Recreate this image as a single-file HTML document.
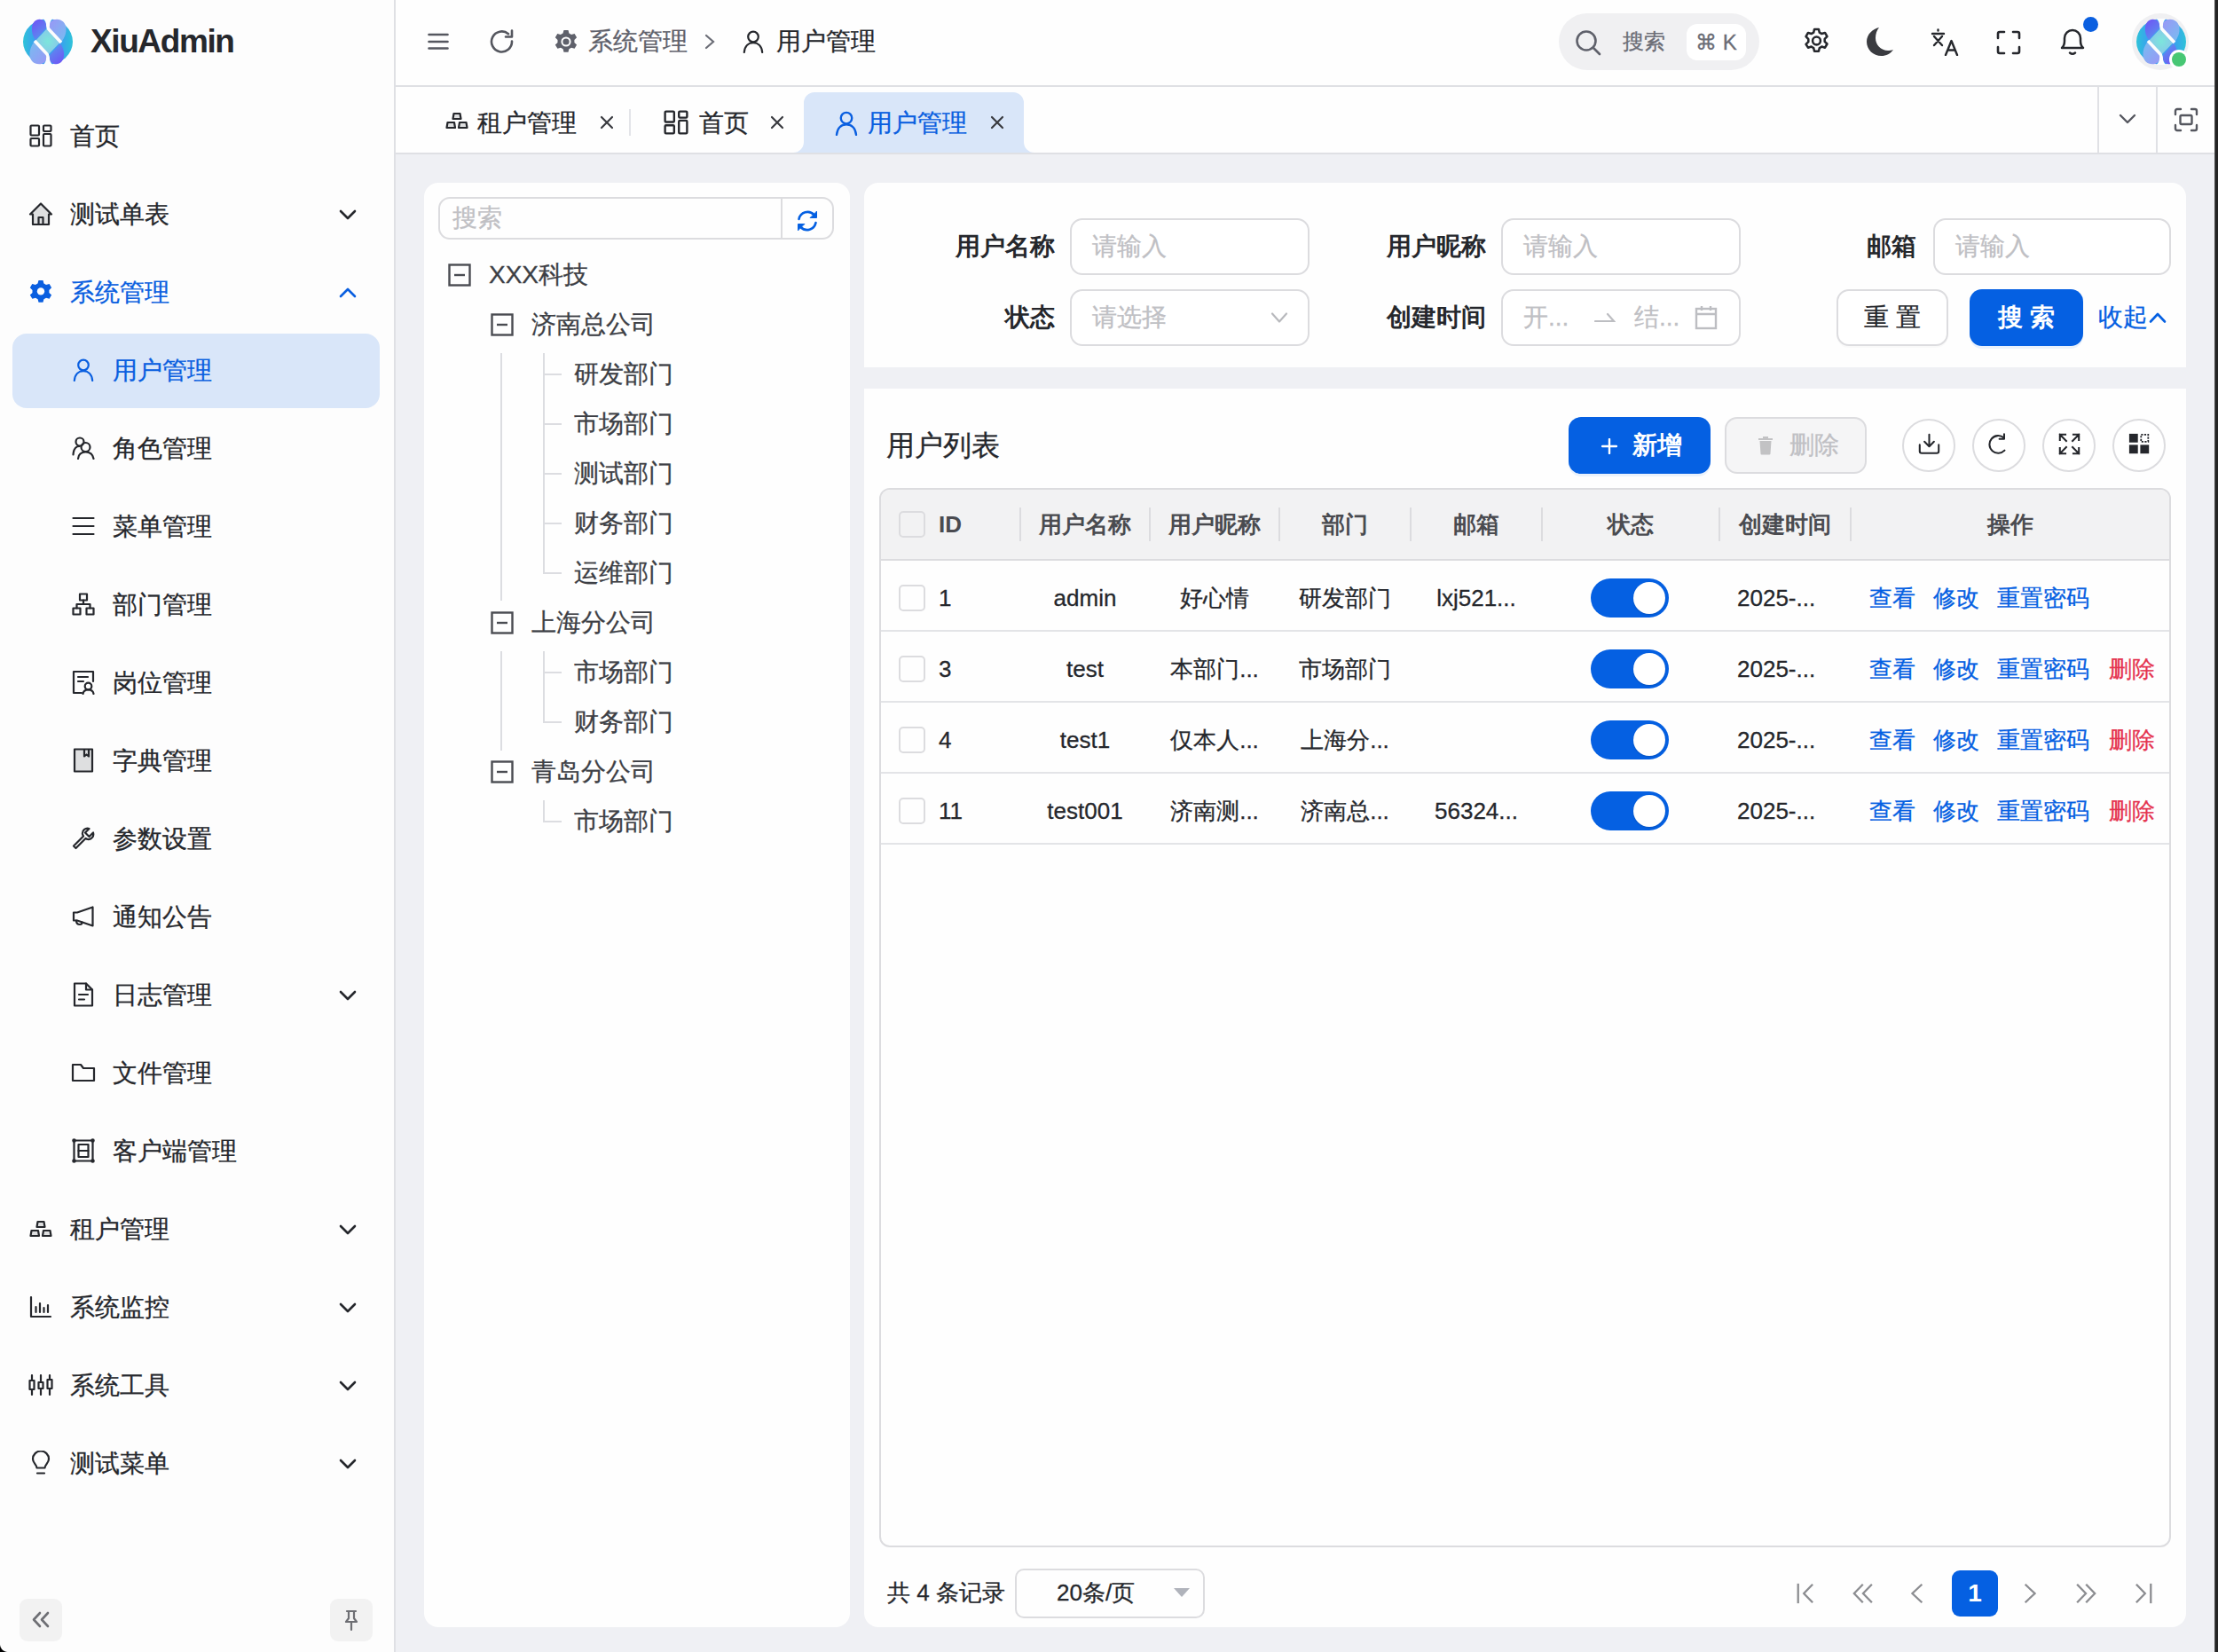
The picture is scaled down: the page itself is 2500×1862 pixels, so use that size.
<!DOCTYPE html>
<html><head><meta charset="utf-8">
<style>
*{box-sizing:border-box;margin:0;padding:0}
html,body{width:2500px;height:1862px;overflow:hidden}
body{position:relative;background:#eff0f4;font-family:"Liberation Sans",sans-serif;color:#25272c;-webkit-text-stroke:0.3px}
.abs{position:absolute}
svg{display:block}
.tx28{font-size:28px;height:40px;line-height:40px;white-space:nowrap}
#edge{left:2496px;top:0;width:4px;height:1862px;background:#242424;border-left:1px solid #4e4e4e}
#corner{left:0;top:1853px;width:9px;height:9px;background:radial-gradient(circle at 9px 0,rgba(0,0,0,0) 8.5px,#000 9.5px)}
#side{left:0;top:0;width:444px;height:1862px;background:#fdfdfd}
#sideb{left:444px;top:0;width:2px;height:1862px;background:#dfe0e4}
.logo{left:26px;top:21px;width:56px;height:52px}
.brand{left:102px;top:22px;height:50px;line-height:50px;font-size:37px;font-weight:bold;color:#25272c;letter-spacing:-1.4px;-webkit-text-stroke:0}
.mi{position:absolute;left:0;width:444px;height:88px;font-size:28px;color:#25272c}
.mi .ic{position:absolute}
.mi .tx{position:absolute;left:79px;top:1px;height:88px;line-height:88px;white-space:nowrap}
.mi.l2 .tx{left:127px}
.mi .chev{position:absolute;left:382px;top:39px;width:20px;height:12px}
.mi.act{color:#0a5fe0}
#activebg{left:14px;top:376px;width:414px;height:84px;background:#d9e6f9;border-radius:16px}
.sbtn{top:1802px;width:48px;height:48px;background:#f2f2f2;border-radius:9px}
#hdr{left:446px;top:0;width:2050px;height:96px;background:#fefefe}
#hdrb{left:446px;top:96px;width:2050px;height:2px;background:#dfe0e4}
#tabs{left:446px;top:98px;width:2050px;height:74px;background:#fefefe}
#tabsb{left:446px;top:172px;width:2050px;height:2px;background:#dfe0e4}
.card{background:#fefefe}
@media (max-width:1300px){html{zoom:0.5}}
.ph{font-size:28px;height:40px;line-height:40px;color:#bfc0c4;white-space:nowrap}
.tt{font-size:28px;height:40px;line-height:40px;color:#3d3f45;white-space:nowrap}
.lbl{font-size:28px;height:40px;line-height:40px;color:#25272c;font-weight:bold;-webkit-text-stroke:0;text-align:right;white-space:nowrap}
.th{font-size:26px;height:40px;line-height:40px;color:#4a4b50;font-weight:bold;-webkit-text-stroke:0;white-space:nowrap}
.td{font-size:26px;height:38px;line-height:38px;color:#25272c;white-space:nowrap}
</style></head><body>
<div class="abs" id="side"></div>
<div class="abs" id="sideb"></div>
<div class="abs" id="hdr"></div>
<div class="abs" id="hdrb"></div>
<div class="abs" id="tabs"></div>
<div class="abs" id="tabsb"></div>
<div class="abs logo"><svg viewBox="0 0 56 52" width="56" height="52">
<defs>
<linearGradient id="lg0" x1="0" y1="0" x2="1" y2="0"><stop offset="0" stop-color="#2ec3d8"/><stop offset=".25" stop-color="#3a9ff0"/><stop offset=".75" stop-color="#3a9ff0"/><stop offset="1" stop-color="#2ec3d8"/></linearGradient>
<radialGradient id="lg1" cx=".5" cy=".5" r=".6"><stop offset="0" stop-color="#7ce6dc"/><stop offset="1" stop-color="#8cc0ec"/></radialGradient>
<linearGradient id="lgp" x1="0" y1="0" x2="0.6" y2="1"><stop offset="0" stop-color="#7050f6"/><stop offset="1" stop-color="#5a90ee"/></linearGradient>
<linearGradient id="lgl" x1="0" y1="0" x2="1" y2="1"><stop offset="0" stop-color="#9a96f6"/><stop offset="1" stop-color="#78bdf0"/></linearGradient>
</defs>
<ellipse cx="28" cy="26" rx="28" ry="25.8" fill="url(#lg0)"/>
<g>
<path d="M18.5 0.7 C23 0.7 26.5 4 26.5 8 C26.5 10 25.5 11.5 24.5 12.5 L14 24 C11 20 9.5 15 10 10 C10.5 4.5 14 0.7 18.5 0.7Z" fill="url(#lgp)"/>
<path d="M38 0.7 C44 0.7 48 5 48.5 10.5 C49 16 47 21 43.5 26 L31 12 C30 11 29.5 9.5 29.5 8 C29.5 4 33 0.7 38 0.7Z" fill="url(#lgl)"/>
</g><g transform="rotate(180 28 26)">
<path d="M18.5 0.7 C23 0.7 26.5 4 26.5 8 C26.5 10 25.5 11.5 24.5 12.5 L14 24 C11 20 9.5 15 10 10 C10.5 4.5 14 0.7 18.5 0.7Z" fill="url(#lgp)"/>
<path d="M38 0.7 C44 0.7 48 5 48.5 10.5 C49 16 47 21 43.5 26 L31 12 C30 11 29.5 9.5 29.5 8 C29.5 4 33 0.7 38 0.7Z" fill="url(#lgl)"/>
</g>
<path d="M28 10 L42.5 26 L28 41 L13.5 25.5Z" fill="url(#lg1)"/>
<path d="M28 0 V9 Q28 11 29.5 12.5 L43 27" stroke="#fdfdfd" stroke-width="3.6" fill="none"/>
<path d="M13 25 L26.5 39.5 Q28 41 28 43 V52" stroke="#fdfdfd" stroke-width="3.6" fill="none"/>
<path d="M21 -1 H35 C31.5 1 30 4 29.8 8 L28 10 L26.2 8 C26 4 24.5 1 21 -1Z" fill="#fdfdfd"/>
<path d="M21 53 H35 C31.5 51 30 48 29.8 44 L28 42 L26.2 44 C26 48 24.5 51 21 53Z" fill="#fdfdfd"/>
</svg></div><div class="abs brand">XiuAdmin</div><div class="abs" id="activebg"></div><div class="mi" style="top:109px"><div class="ic" style="left:33.0px;top:31.0px"><svg viewBox="0 0 26 26" width="26" height="26" fill="none" stroke="currentColor" stroke-width="2.2" stroke-linecap="round" stroke-linejoin="round"><rect x="1.5" y="1.5" width="9.5" height="11" rx="1"/><rect x="1.5" y="16" width="9.5" height="8.5" rx="1"/><rect x="16" y="1.5" width="8.5" height="6.5" rx="1"/><rect x="16" y="11" width="8.5" height="13.5" rx="1"/></svg></div><div class="tx">首页</div></div>
<div class="mi" style="top:197px"><div class="ic" style="left:32.0px;top:30.0px"><svg viewBox="0 0 28 28" width="28" height="28" fill="#dedfe0" stroke="currentColor" stroke-width="2.2" stroke-linejoin="round"><path d="M2 14.5 L14 2.5 L26 14.5 L23 14.5 L23 26 L5 26 L5 14.5 Z"/><path d="M11.5 26 V18 H16.5 V26" fill="none"/></svg></div><div class="tx">测试单表</div><div class="chev"><svg viewBox="0 0 20 12" width="20" height="12" fill="none" stroke="currentColor" stroke-width="2.6" stroke-linecap="round" stroke-linejoin="round"><path d="M2 2L10 10L18 2"/></svg></div></div>
<div class="mi act" style="top:285px"><div class="ic" style="left:33.0px;top:30.0px"><svg viewBox="0 0 26 28" width="26" height="28"><path fill="currentColor" d="M10.5 1h5l.9 3.6 2.6 1.5 3.6-1.1 2.5 4.3-2.7 2.6v3l2.7 2.6-2.5 4.3-3.6-1.1-2.6 1.5-.9 3.6h-5l-.9-3.6-2.6-1.5-3.6 1.1L.8 17.5l2.7-2.6v-3L.8 9.3l2.5-4.3 3.6 1.1 2.6-1.5z"/><circle cx="13" cy="13.4" r="4.2" fill="#fdfdfd"/></svg></div><div class="tx">系统管理</div><div class="chev"><svg viewBox="0 0 20 12" width="20" height="12" fill="none" stroke="currentColor" stroke-width="2.6" stroke-linecap="round" stroke-linejoin="round"><path d="M2 10L10 2L18 10"/></svg></div></div>
<div class="mi l2 act" style="top:373px"><div class="ic" style="left:82.0px;top:31.0px"><svg viewBox="0 0 24 26" width="24" height="26" fill="none" stroke="currentColor" stroke-width="2.2" stroke-linecap="round" stroke-linejoin="round"><circle cx="12" cy="7.5" r="5.8"/><path d="M1.8 25 C2.5 17.5 7 14.2 12 14.2 C17 14.2 21.5 17.5 22.2 25"/></svg></div><div class="tx">用户管理</div></div>
<div class="mi l2" style="top:461px"><div class="ic" style="left:81.0px;top:31.0px"><svg viewBox="0 0 26 26" width="26" height="26" fill="none" stroke="currentColor" stroke-width="2.2" stroke-linecap="round" stroke-linejoin="round"><circle cx="9" cy="6" r="4.5"/><path d="M1.5 20.5 C2 14 5 11 8.5 11"/><circle cx="15.5" cy="12" r="5"/><path d="M7 25 C7.5 19.5 11 17.5 15.5 17.5 C20 17.5 23.5 19.5 24.5 25"/></svg></div><div class="tx">角色管理</div></div>
<div class="mi l2" style="top:549px"><div class="ic" style="left:81.0px;top:31.0px"><svg viewBox="0 0 26 26" width="26" height="26" fill="none" stroke="currentColor" stroke-width="2.2" stroke-linecap="round" stroke-linejoin="round"><path d="M1.5 4H24.5M1.5 13H24.5M1.5 22H24.5"/></svg></div><div class="tx">菜单管理</div></div>
<div class="mi l2" style="top:637px"><div class="ic" style="left:81.0px;top:31.0px"><svg viewBox="0 0 26 26" width="26" height="26" fill="none" stroke="currentColor" stroke-width="2.2" stroke-linecap="round" stroke-linejoin="round"><rect x="9" y="1.5" width="8" height="7"/><rect x="1.5" y="17.5" width="8" height="7"/><rect x="16.5" y="17.5" width="8" height="7"/><path d="M13 8.5V13M5.5 17.5V13H20.5V17.5"/></svg></div><div class="tx">部门管理</div></div>
<div class="mi l2" style="top:725px"><div class="ic" style="left:81.0px;top:30.0px"><svg viewBox="0 0 26 28" width="26" height="28" fill="none" stroke="currentColor" stroke-width="2.2" stroke-linecap="round" stroke-linejoin="round"><path d="M11 26H2V2H24V13"/><path d="M7 8H18M7 13H13"/><circle cx="18.5" cy="18.5" r="3.8"/><path d="M12.5 27C13 23.5 15.5 22.3 18.5 22.3S24 23.5 24.5 27"/></svg></div><div class="tx">岗位管理</div></div>
<div class="mi l2" style="top:813px"><div class="ic" style="left:82.0px;top:30.0px"><svg viewBox="0 0 24 28" width="24" height="28" fill="#dedfe0" stroke="currentColor" stroke-width="2.2" stroke-linejoin="round"><rect x="2" y="1.5" width="20" height="25"/><path d="M13 1.5V9.5L15.5 7.5L18 9.5V1.5" fill="none"/></svg></div><div class="tx">字典管理</div></div>
<div class="mi l2" style="top:901px"><div class="ic" style="left:81.0px;top:31.0px"><svg viewBox="0 0 26 26" width="26" height="26" fill="none" stroke="currentColor" stroke-width="2.2" stroke-linecap="round" stroke-linejoin="round"><path d="M24 6.5 L19.5 11 L15 6.5 L19.5 2 C15.5 .8 11.5 3.8 12 8 C12.2 9 12.5 9.8 13 10.5 L2 21.5 L4.5 24 L15.5 13 C16.3 13.5 17 13.8 18 14 C22.2 14.5 25.2 10.5 24 6.5Z"/></svg></div><div class="tx">参数设置</div></div>
<div class="mi l2" style="top:989px"><div class="ic" style="left:81.0px;top:31.0px"><svg viewBox="0 0 26 26" width="26" height="26" fill="none" stroke="currentColor" stroke-width="2.2" stroke-linecap="round" stroke-linejoin="round"><path d="M2 8.5H6L23.5 2.5V23.5L6 17.5H2Z"/><path d="M5 17.5Q5 22 9 22Q11.5 22 11.5 19.5"/></svg></div><div class="tx">通知公告</div></div>
<div class="mi l2" style="top:1077px"><div class="ic" style="left:82.0px;top:30.0px"><svg viewBox="0 0 24 28" width="24" height="28" fill="none" stroke="currentColor" stroke-width="2.2" stroke-linecap="round" stroke-linejoin="round"><path d="M15 1.5H2V26.5H22V8.5Z"/><path d="M15 1.5V8.5H22"/><path d="M7 14H17M7 19.5H13"/></svg></div><div class="tx">日志管理</div><div class="chev"><svg viewBox="0 0 20 12" width="20" height="12" fill="none" stroke="currentColor" stroke-width="2.6" stroke-linecap="round" stroke-linejoin="round"><path d="M2 2L10 10L18 2"/></svg></div></div>
<div class="mi l2" style="top:1165px"><div class="ic" style="left:80.0px;top:32.0px"><svg viewBox="0 0 28 24" width="28" height="24" fill="none" stroke="currentColor" stroke-width="2.2" stroke-linecap="round" stroke-linejoin="round"><path d="M2 3H11L14 7H26V21H2Z"/></svg></div><div class="tx">文件管理</div></div>
<div class="mi l2" style="top:1253px"><div class="ic" style="left:81.0px;top:30.0px"><svg viewBox="0 0 26 28" width="26" height="28" fill="none" stroke="currentColor" stroke-width="2.2" stroke-linecap="round" stroke-linejoin="round"><rect x="2.5" y="2.5" width="21" height="23"/><rect x="7.5" y="7" width="11" height="14"/><path d="M7.5 14H18.5"/><circle cx="2.5" cy="2.5" r="1.2" fill="currentColor"/><circle cx="23.5" cy="2.5" r="1.2" fill="currentColor"/><circle cx="2.5" cy="25.5" r="1.2" fill="currentColor"/><circle cx="23.5" cy="25.5" r="1.2" fill="currentColor"/></svg></div><div class="tx">客户端管理</div></div>
<div class="mi" style="top:1341px"><div class="ic" style="left:33.0px;top:34.0px"><svg viewBox="0 0 26 20" width="26" height="20" fill="#dedfe0" stroke="currentColor" stroke-width="2.2" stroke-linejoin="round"><path d="M9.5 2H16.5L17.5 8H8.5Z"/><path d="M2.5 12H10L11 18H1.5Z"/><path d="M16 12H23.5L24.5 18H15Z"/></svg></div><div class="tx">租户管理</div><div class="chev"><svg viewBox="0 0 20 12" width="20" height="12" fill="none" stroke="currentColor" stroke-width="2.6" stroke-linecap="round" stroke-linejoin="round"><path d="M2 2L10 10L18 2"/></svg></div></div>
<div class="mi" style="top:1429px"><div class="ic" style="left:33.0px;top:31.0px"><svg viewBox="0 0 26 26" width="26" height="26" fill="none" stroke="currentColor" stroke-width="2.2" stroke-linecap="round" stroke-linejoin="round"><path d="M2 2V24H24"/><path d="M7.5 19V13M12 19V9M16.5 19V14M21 19V11"/></svg></div><div class="tx">系统监控</div><div class="chev"><svg viewBox="0 0 20 12" width="20" height="12" fill="none" stroke="currentColor" stroke-width="2.6" stroke-linecap="round" stroke-linejoin="round"><path d="M2 2L10 10L18 2"/></svg></div></div>
<div class="mi" style="top:1517px"><div class="ic" style="left:32.0px;top:31.0px"><svg viewBox="0 0 28 26" width="28" height="26" fill="none" stroke="currentColor" stroke-width="2.2" stroke-linecap="round" stroke-linejoin="round"><path d="M4 2V24M14 2V24M24 2V24"/><rect x="1.5" y="8" width="5" height="10" fill="#fdfdfd"/><rect x="11.5" y="10" width="5" height="7" fill="#fdfdfd"/><rect x="21.5" y="7" width="5" height="10" fill="#fdfdfd"/></svg></div><div class="tx">系统工具</div><div class="chev"><svg viewBox="0 0 20 12" width="20" height="12" fill="none" stroke="currentColor" stroke-width="2.6" stroke-linecap="round" stroke-linejoin="round"><path d="M2 2L10 10L18 2"/></svg></div></div>
<div class="mi" style="top:1605px"><div class="ic" style="left:34.0px;top:30.0px"><svg viewBox="0 0 24 28" width="24" height="28" fill="none" stroke="currentColor" stroke-width="2.2" stroke-linecap="round" stroke-linejoin="round"><path d="M7.5 19.5C7.5 16 3 14 3 9.5A9 9 0 0 1 21 9.5C21 14 16.5 16 16.5 19.5Z"/><path d="M8 25.5H16"/></svg></div><div class="tx">测试菜单</div><div class="chev"><svg viewBox="0 0 20 12" width="20" height="12" fill="none" stroke="currentColor" stroke-width="2.6" stroke-linecap="round" stroke-linejoin="round"><path d="M2 2L10 10L18 2"/></svg></div></div><div class="abs sbtn" style="left:22px"><svg viewBox="0 0 48 48" width="48" height="48" fill="none" stroke="#6e6f74" stroke-width="2.6" stroke-linecap="round" stroke-linejoin="round"><path d="M23 16L16 23.5L23 31M32 16L25 23.5L32 31"/></svg></div>
<div class="abs sbtn" style="left:372px"><svg viewBox="0 0 48 48" width="48" height="48" fill="none" stroke="#6e6f74" stroke-width="2.2" stroke-linecap="round" stroke-linejoin="round"><path d="M19 14H29M21 14V22L18 26H30L27 22V14M24 26V35"/></svg></div>

<div class="abs" style="left:482px;top:37px;color:#55575f"><svg viewBox="0 0 24 20" width="24" height="20" fill="none" stroke="currentColor" stroke-width="2.6" stroke-linecap="round"><path d="M1.5 2H22.5M1.5 10H22.5M1.5 17.5H22.5"/></svg></div>
<div class="abs" style="left:552px;top:33px;color:#55575f"><svg viewBox="0 0 28 28" width="28" height="28" fill="none" stroke="currentColor" stroke-width="2.6" stroke-linecap="round" stroke-linejoin="round"><path d="M25 13.5A11.5 11.5 0 1 1 21 5.2"/><path d="M25 1.5V8.5H18"/></svg></div>
<div class="abs" style="left:625px;top:33px;color:#5f616b"><svg viewBox="0 0 26 28" width="26" height="28"><path fill="currentColor" d="M10.5 1h5l.9 3.6 2.6 1.5 3.6-1.1 2.5 4.3-2.7 2.6v3l2.7 2.6-2.5 4.3-3.6-1.1-2.6 1.5-.9 3.6h-5l-.9-3.6-2.6-1.5-3.6 1.1L.8 17.5l2.7-2.6v-3L.8 9.3l2.5-4.3 3.6 1.1 2.6-1.5z"/><circle cx="13" cy="14" r="4.6" fill="none" stroke="#fff" stroke-width="2"/></svg></div>
<div class="abs tx28" style="left:663px;top:27px;color:#5f616b">系统管理</div>
<div class="abs" style="left:794px;top:38px;color:#6b6d76"><svg viewBox="0 0 12 18" width="12" height="18" fill="none" stroke="currentColor" stroke-width="2.2" stroke-linecap="round"><path d="M2 2L10 9L2 16"/></svg></div>
<div class="abs" style="left:837px;top:34px;color:#25272c"><svg viewBox="0 0 24 26" width="24" height="26" fill="none" stroke="currentColor" stroke-width="2.2" stroke-linecap="round" stroke-linejoin="round"><circle cx="12" cy="7.5" r="5.8"/><path d="M1.8 25 C2.5 17.5 7 14.2 12 14.2 C17 14.2 21.5 17.5 22.2 25"/></svg></div>
<div class="abs tx28" style="left:875px;top:27px;color:#25272c">用户管理</div>

<div class="abs" style="left:1757px;top:15px;width:226px;height:64px;border-radius:32px;background:#f0f0f2"></div>
<div class="abs" style="left:1775px;top:33px;color:#5f616b"><svg viewBox="0 0 30 30" width="30" height="30" fill="none" stroke="currentColor" stroke-width="2.6" stroke-linecap="round"><circle cx="13" cy="13" r="10.5"/><path d="M21 21L28 28"/></svg></div>
<div class="abs" style="left:1829px;top:29px;height:36px;line-height:36px;font-size:24px;color:#6b6d76">搜索</div>
<div class="abs" style="left:1901px;top:27px;width:67px;height:41px;border-radius:12px;background:#fff;font-size:24px;line-height:41px;text-align:center;color:#6b6d76">⌘ K</div>

<div class="abs" style="left:2032px;top:31px;color:#25272c"><svg viewBox="0 0 28 28" width="31" height="31" fill="none" stroke="currentColor" stroke-width="2.3" stroke-linejoin="round"><path d="M11.8 1.8h4.4l.8 3.3 2.3 1.3 3.3-1 2.2 3.8-2.5 2.4v2.7l2.5 2.4-2.2 3.8-3.3-1-2.3 1.3-.8 3.3h-4.4l-.8-3.3-2.3-1.3-3.3 1L3.2 17l2.5-2.4v-2.7L3.2 9.2l2.2-3.8 3.3 1 2.3-1.3z"/><circle cx="14" cy="13.5" r="4"/></svg></div>
<div class="abs" style="left:2103px;top:30px;color:#3a3b40"><svg viewBox="0 0 32 34" width="32" height="34"><path fill="currentColor" d="M15 1C8 2.5 1 8.5 1 17 1 26 8.5 33 17.5 33 23 33 28 30.5 31 26 29 26.8 27 27 25 27 17 27 11 20.5 11 13 11 8 12.5 4 15 1Z"/></svg></div>
<div class="abs" style="left:2176px;top:31px;color:#25272c"><svg viewBox="0 0 32 32" width="32" height="32" fill="none" stroke="currentColor" stroke-width="2.4" stroke-linecap="round" stroke-linejoin="round"><path d="M2 7H15M8.5 3.5V2.5M4 10L13 20M13 10L4 20"/><path d="M17 31L23.5 15L30 31M19.5 25.5H27.5"/></svg></div>
<div class="abs" style="left:2250px;top:34px;color:#25272c"><svg viewBox="0 0 28 28" width="28" height="28" fill="none" stroke="currentColor" stroke-width="2.6" stroke-linecap="round" stroke-linejoin="round"><path d="M2 9V4A2 2 0 0 1 4 2H9M19 2H24A2 2 0 0 1 26 4V9M26 19V24A2 2 0 0 1 24 26H19M9 26H4A2 2 0 0 1 2 24V19"/></svg></div>
<div class="abs" style="left:2321px;top:29px;color:#25272c"><svg viewBox="0 0 30 34" width="30" height="34" fill="none" stroke="currentColor" stroke-width="2.5" stroke-linecap="round" stroke-linejoin="round"><path d="M3 25Q6 22.5 6 17V14A9 9 0 0 1 24 14V17Q24 22.5 27 25Z"/><path d="M12 30.5Q15 33 18 30.5"/></svg></div>
<div class="abs" style="left:2348px;top:19px;width:17px;height:17px;border-radius:50%;background:#0a5fe0"></div>
<div class="abs" style="left:2403px;top:15px;width:64px;height:64px;border-radius:50%;background:#f0f0f2"></div>
<div class="abs" style="left:2408px;top:21px;transform:scale(1.0);transform-origin:0 0"><svg viewBox="0 0 56 52" width="56" height="52">
<defs>
<linearGradient id="lh0" x1="0" y1="0" x2="1" y2="0"><stop offset="0" stop-color="#2ec3d8"/><stop offset=".25" stop-color="#3a9ff0"/><stop offset=".75" stop-color="#3a9ff0"/><stop offset="1" stop-color="#2ec3d8"/></linearGradient>
<radialGradient id="lh1" cx=".5" cy=".5" r=".6"><stop offset="0" stop-color="#7ce6dc"/><stop offset="1" stop-color="#8cc0ec"/></radialGradient>
<linearGradient id="lhp" x1="0" y1="0" x2="0.6" y2="1"><stop offset="0" stop-color="#7050f6"/><stop offset="1" stop-color="#5a90ee"/></linearGradient>
<linearGradient id="lhl" x1="0" y1="0" x2="1" y2="1"><stop offset="0" stop-color="#9a96f6"/><stop offset="1" stop-color="#78bdf0"/></linearGradient>
</defs>
<ellipse cx="28" cy="26" rx="28" ry="25.8" fill="url(#lh0)"/>
<g>
<path d="M18.5 0.7 C23 0.7 26.5 4 26.5 8 C26.5 10 25.5 11.5 24.5 12.5 L14 24 C11 20 9.5 15 10 10 C10.5 4.5 14 0.7 18.5 0.7Z" fill="url(#lhp)"/>
<path d="M38 0.7 C44 0.7 48 5 48.5 10.5 C49 16 47 21 43.5 26 L31 12 C30 11 29.5 9.5 29.5 8 C29.5 4 33 0.7 38 0.7Z" fill="url(#lhl)"/>
</g><g transform="rotate(180 28 26)">
<path d="M18.5 0.7 C23 0.7 26.5 4 26.5 8 C26.5 10 25.5 11.5 24.5 12.5 L14 24 C11 20 9.5 15 10 10 C10.5 4.5 14 0.7 18.5 0.7Z" fill="url(#lhp)"/>
<path d="M38 0.7 C44 0.7 48 5 48.5 10.5 C49 16 47 21 43.5 26 L31 12 C30 11 29.5 9.5 29.5 8 C29.5 4 33 0.7 38 0.7Z" fill="url(#lhl)"/>
</g>
<path d="M28 10 L42.5 26 L28 41 L13.5 25.5Z" fill="url(#lh1)"/>
<path d="M28 0 V9 Q28 11 29.5 12.5 L43 27" stroke="#fdfdfd" stroke-width="3.6" fill="none"/>
<path d="M13 25 L26.5 39.5 Q28 41 28 43 V52" stroke="#fdfdfd" stroke-width="3.6" fill="none"/>
<path d="M21 -1 H35 C31.5 1 30 4 29.8 8 L28 10 L26.2 8 C26 4 24.5 1 21 -1Z" fill="#fdfdfd"/>
<path d="M21 53 H35 C31.5 51 30 48 29.8 44 L28 42 L26.2 44 C26 48 24.5 51 21 53Z" fill="#fdfdfd"/>
</svg></div>
<div class="abs" style="left:2445px;top:56px;width:22px;height:22px;border-radius:50%;background:#fff"></div>
<div class="abs" style="left:2448px;top:59px;width:16px;height:16px;border-radius:50%;background:#47c774"></div>

<div class="abs" style="left:502px;top:126px;color:#25272c"><svg viewBox="0 0 26 20" width="26" height="20" fill="#dedfe0" stroke="currentColor" stroke-width="2.2" stroke-linejoin="round"><path d="M9.5 2H16.5L17.5 8H8.5Z"/><path d="M2.5 12H10L11 18H1.5Z"/><path d="M16 12H23.5L24.5 18H15Z"/></svg></div>
<div class="abs tx28" style="left:538px;top:119px;color:#25272c">租户管理</div>
<div class="abs" style="left:676px;top:130px;color:#3a3b40"><svg viewBox="0 0 16 16" width="16" height="16" fill="none" stroke="currentColor" stroke-width="2.2" stroke-linecap="round"><path d="M2 2L14 14M14 2L2 14"/></svg></div>
<div class="abs" style="left:709px;top:123px;width:2px;height:30px;background:#e3e4e8"></div>
<div class="abs" style="left:748px;top:124px;color:#25272c"><svg viewBox="0 0 26 26" width="28" height="28" fill="none" stroke="currentColor" stroke-width="2.2" stroke-linecap="round" stroke-linejoin="round"><rect x="1.5" y="1.5" width="9.5" height="11" rx="1"/><rect x="1.5" y="16" width="9.5" height="8.5" rx="1"/><rect x="16" y="1.5" width="8.5" height="6.5" rx="1"/><rect x="16" y="11" width="8.5" height="13.5" rx="1"/></svg></div>
<div class="abs tx28" style="left:788px;top:119px;color:#25272c">首页</div>
<div class="abs" style="left:868px;top:130px;color:#3a3b40"><svg viewBox="0 0 16 16" width="16" height="16" fill="none" stroke="currentColor" stroke-width="2.2" stroke-linecap="round"><path d="M2 2L14 14M14 2L2 14"/></svg></div>
<svg class="abs" style="left:894px;top:104px" width="272" height="68" viewBox="0 0 272 68"><path d="M0 68 A12 12 0 0 0 12 56 V12 A12 12 0 0 1 24 0 H248 A12 12 0 0 1 260 12 V56 A12 12 0 0 0 272 68 Z" fill="#d9e6f9"/></svg>
<div class="abs" style="left:941px;top:125px;color:#0a5fe0"><svg viewBox="0 0 24 26" width="26" height="28" fill="none" stroke="currentColor" stroke-width="2.2" stroke-linecap="round" stroke-linejoin="round"><circle cx="12" cy="7.5" r="5.8"/><path d="M1.8 25 C2.5 17.5 7 14.2 12 14.2 C17 14.2 21.5 17.5 22.2 25"/></svg></div>
<div class="abs tx28" style="left:978px;top:119px;color:#0a5fe0">用户管理</div>
<div class="abs" style="left:1116px;top:130px;color:#3a3b40"><svg viewBox="0 0 16 16" width="16" height="16" fill="none" stroke="currentColor" stroke-width="2.2" stroke-linecap="round"><path d="M2 2L14 14M14 2L2 14"/></svg></div>
<div class="abs" style="left:2364px;top:98px;width:2px;height:74px;background:#e0e1e5"></div>
<div class="abs" style="left:2430px;top:98px;width:2px;height:74px;background:#e0e1e5"></div>
<div class="abs" style="left:2388px;top:128px;color:#55575f"><svg viewBox="0 0 20 12" width="20" height="12" fill="none" stroke="currentColor" stroke-width="2.4" stroke-linecap="round" stroke-linejoin="round"><path d="M2 2L10 10L18 2"/></svg></div>
<div class="abs" style="left:2450px;top:121px;color:#55575f"><svg viewBox="0 0 28 28" width="28" height="28" fill="none" stroke="currentColor" stroke-width="2.4" stroke-linecap="round" stroke-linejoin="round"><path d="M2 8V4A2 2 0 0 1 4 2H8M20 2H24A2 2 0 0 1 26 4V8M26 20V24A2 2 0 0 1 24 26H20M8 26H4A2 2 0 0 1 2 24V20"/><rect x="7.5" y="9" width="13" height="10" rx="1.5"/></svg></div>

<div class="abs card" style="left:478px;top:206px;width:480px;height:1628px;border-radius:16px"></div>
<div class="abs card" style="left:974px;top:206px;width:1490px;height:208px;border-radius:16px 16px 0 0"></div>
<div class="abs card" style="left:974px;top:438px;width:1490px;height:1396px;border-radius:0 0 16px 16px"></div>
<div class="abs" style="left:494px;top:222px;width:446px;height:48px;border:2px solid #dcdcdf;border-radius:13px"></div>
<div class="abs" style="left:880px;top:224px;width:2px;height:44px;background:#dcdcdf"></div>
<div class="abs ph" style="left:510px;top:226px;height:40px;line-height:40px;font-size:28px;color:#c0c0c4">搜索</div>
<div class="abs" style="left:896px;top:235px;color:#0560e2"><svg viewBox="0 0 28 28" width="28" height="28" fill="none" stroke="currentColor" stroke-width="2.6" stroke-linecap="round"><path d="M4.5 12A10 10 0 0 1 21.5 7"/><path d="M23.5 16A10 10 0 0 1 6.5 21"/><path d="M24.5 3.5V10.5H17.5Z" fill="currentColor" stroke-width="1" stroke-linejoin="round"/><path d="M3.5 24.5V17.5H10.5Z" fill="currentColor" stroke-width="1" stroke-linejoin="round"/></svg></div>
<div class="abs" style="left:505px;top:297px"><svg viewBox="0 0 26 26" width="26" height="26" fill="none" stroke="#4a4c52" stroke-width="2.4"><rect x="1.5" y="1.5" width="23" height="23"/><path d="M7 13H19"/></svg></div>
<div class="abs tt" style="left:551px;top:290px">XXX科技</div>
<div class="abs" style="left:553px;top:353px"><svg viewBox="0 0 26 26" width="26" height="26" fill="none" stroke="#4a4c52" stroke-width="2.4"><rect x="1.5" y="1.5" width="23" height="23"/><path d="M7 13H19"/></svg></div>
<div class="abs tt" style="left:599px;top:346px">济南总公司</div>
<div class="abs tt" style="left:647px;top:402px">研发部门</div>
<div class="abs tt" style="left:647px;top:458px">市场部门</div>
<div class="abs tt" style="left:647px;top:514px">测试部门</div>
<div class="abs tt" style="left:647px;top:570px">财务部门</div>
<div class="abs tt" style="left:647px;top:626px">运维部门</div>
<div class="abs" style="left:553px;top:689px"><svg viewBox="0 0 26 26" width="26" height="26" fill="none" stroke="#4a4c52" stroke-width="2.4"><rect x="1.5" y="1.5" width="23" height="23"/><path d="M7 13H19"/></svg></div>
<div class="abs tt" style="left:599px;top:682px">上海分公司</div>
<div class="abs tt" style="left:647px;top:738px">市场部门</div>
<div class="abs tt" style="left:647px;top:794px">财务部门</div>
<div class="abs" style="left:553px;top:857px"><svg viewBox="0 0 26 26" width="26" height="26" fill="none" stroke="#4a4c52" stroke-width="2.4"><rect x="1.5" y="1.5" width="23" height="23"/><path d="M7 13H19"/></svg></div>
<div class="abs tt" style="left:599px;top:850px">青岛分公司</div>
<div class="abs tt" style="left:647px;top:906px">市场部门</div>
<div class="abs" style="left:564px;top:398px;width:2px;height:279px;background:#dcdde1"></div>
<div class="abs" style="left:612px;top:398px;width:2px;height:249px;background:#dcdde1"></div>
<div class="abs" style="left:612px;top:421px;width:21px;height:2px;background:#dcdde1"></div>
<div class="abs" style="left:612px;top:477px;width:21px;height:2px;background:#dcdde1"></div>
<div class="abs" style="left:612px;top:533px;width:21px;height:2px;background:#dcdde1"></div>
<div class="abs" style="left:612px;top:589px;width:21px;height:2px;background:#dcdde1"></div>
<div class="abs" style="left:612px;top:645px;width:21px;height:2px;background:#dcdde1"></div>
<div class="abs" style="left:564px;top:734px;width:2px;height:112px;background:#dcdde1"></div>
<div class="abs" style="left:612px;top:734px;width:2px;height:81px;background:#dcdde1"></div>
<div class="abs" style="left:612px;top:757px;width:21px;height:2px;background:#dcdde1"></div>
<div class="abs" style="left:612px;top:813px;width:21px;height:2px;background:#dcdde1"></div>
<div class="abs" style="left:612px;top:902px;width:2px;height:25px;background:#dcdde1"></div>
<div class="abs" style="left:612px;top:925px;width:21px;height:2px;background:#dcdde1"></div>
<div class="abs lbl" style="left:889px;width:300px;top:258px">用户名称</div>
<div class="abs" style="left:1206px;top:246px;width:270px;height:64px;border:2px solid #dcdcdf;border-radius:14px;background:#fff"></div>
<div class="abs ph" style="left:1231px;top:258px">请输入</div>
<div class="abs lbl" style="left:1375px;width:300px;top:258px">用户昵称</div>
<div class="abs" style="left:1692px;top:246px;width:270px;height:64px;border:2px solid #dcdcdf;border-radius:14px;background:#fff"></div>
<div class="abs ph" style="left:1717px;top:258px">请输入</div>
<div class="abs lbl" style="left:1860px;width:300px;top:258px">邮箱</div>
<div class="abs" style="left:2179px;top:246px;width:268px;height:64px;border:2px solid #dcdcdf;border-radius:14px;background:#fff"></div>
<div class="abs ph" style="left:2204px;top:258px">请输入</div>
<div class="abs lbl" style="left:889px;width:300px;top:338px">状态</div>
<div class="abs" style="left:1206px;top:326px;width:270px;height:64px;border:2px solid #dcdcdf;border-radius:14px;background:#fff"></div>
<div class="abs ph" style="left:1231px;top:338px">请选择</div>
<div class="abs" style="left:1432px;top:351px;color:#b8b9bd"><svg viewBox="0 0 20 14" width="20" height="14" fill="none" stroke="currentColor" stroke-width="2.2" stroke-linecap="round" stroke-linejoin="round"><path d="M2 2.5L10 11.5L18 2.5"/></svg></div>
<div class="abs lbl" style="left:1375px;width:300px;top:338px">创建时间</div>
<div class="abs" style="left:1692px;top:326px;width:270px;height:64px;border:2px solid #dcdcdf;border-radius:14px;background:#fff"></div>
<div class="abs ph" style="left:1717px;top:338px">开...</div>
<div class="abs" style="left:1797px;top:352px;color:#bdbec2"><svg viewBox="0 0 24 12" width="24" height="12" fill="none" stroke="currentColor" stroke-width="2.2" stroke-linecap="round"><path d="M1 10H22L15 2"/></svg></div>
<div class="abs ph" style="left:1842px;top:338px">结...</div>
<div class="abs" style="left:1910px;top:344px;color:#bdbec2"><svg viewBox="0 0 26 28" width="26" height="28" fill="none" stroke="currentColor" stroke-width="2.4"><rect x="2" y="4" width="22" height="22"/><path d="M2 10H24M8 1V6M18 1V6"/></svg></div>
<div class="abs" style="left:2070px;top:326px;width:126px;height:64px;border:2px solid #dcdcdf;border-radius:14px;background:#fff;box-shadow:0 2px 0 rgba(0,0,0,0.02)"></div>
<div class="abs" style="left:2070px;top:338px;width:126px;height:40px;line-height:40px;text-align:center;font-size:28px;color:#25272c;font-weight:500">重 置</div>
<div class="abs" style="left:2220px;top:326px;width:128px;height:64px;border-radius:14px;background:#0560e2;box-shadow:0 3px 0 rgba(5,96,226,0.08)"></div>
<div class="abs" style="left:2220px;top:338px;width:128px;height:40px;line-height:40px;text-align:center;font-size:28px;color:#fff;font-weight:bold;-webkit-text-stroke:0">搜 索</div>
<div class="abs tx28" style="left:2365px;top:338px;color:#0560e2">收起</div>
<div class="abs" style="left:2422px;top:351px;color:#0560e2"><svg viewBox="0 0 20 14" width="20" height="14" fill="none" stroke="currentColor" stroke-width="2.6" stroke-linecap="round" stroke-linejoin="round"><path d="M2 11.5L10 3L18 11.5"/></svg></div>
<div class="abs" style="left:999px;top:480px;height:44px;line-height:44px;font-size:32px;color:#25272c">用户列表</div>
<div class="abs" style="left:1768px;top:470px;width:160px;height:64px;border-radius:14px;background:#0560e2;box-shadow:0 3px 0 rgba(5,96,226,0.08)"></div>
<div class="abs" style="left:1805px;top:494px;color:#fff"><svg viewBox="0 0 18 18" width="18" height="18" fill="none" stroke="currentColor" stroke-width="2.4" stroke-linecap="round"><path d="M9 1V17M1 9H17"/></svg></div>
<div class="abs tx28" style="left:1840px;top:482px;color:#fff;font-weight:bold;-webkit-text-stroke:0">新增</div>
<div class="abs" style="left:1944px;top:470px;width:160px;height:64px;border-radius:14px;background:#f5f5f6;border:2px solid #dcdcdf"></div>
<div class="abs" style="left:1981px;top:491px;color:#c2c2c4"><svg viewBox="0 0 18 22" width="18" height="22"><path fill="currentColor" d="M1 3H17V5H1Z M6 1H12V3H6Z M2.5 6H15.5L14.5 20.5Q14.4 21.5 13.4 21.5H4.6Q3.6 21.5 3.5 20.5Z"/></svg></div>
<div class="abs tx28" style="left:2017px;top:482px;color:#c0c0c4">删除</div>
<div class="abs" style="left:2144px;top:472px;width:60px;height:60px;border-radius:50%;border:2px solid #dcdcdf;background:#fff"></div>
<div class="abs" style="left:2162px;top:488px;color:#25272c"><svg viewBox="0 0 28 28" width="25" height="25" fill="none" stroke="currentColor" stroke-width="2.3" stroke-linecap="round" stroke-linejoin="round"><path d="M14 2V17M8 11L14 17L20 11"/><path d="M2 15V23Q2 25.5 4.5 25.5H23.5Q26 25.5 26 23V15"/></svg></div>
<div class="abs" style="left:2223px;top:472px;width:60px;height:60px;border-radius:50%;border:2px solid #dcdcdf;background:#fff"></div>
<div class="abs" style="left:2238px;top:488px;color:#25272c"><svg viewBox="0 0 28 28" width="25" height="25" fill="none" stroke="currentColor" stroke-width="2.3" stroke-linecap="round" stroke-linejoin="round"><path d="M24 22A11 11 0 1 1 23 6"/><path d="M23.5 1.5V7.5H17.5"/></svg></div>
<div class="abs" style="left:2302px;top:472px;width:60px;height:60px;border-radius:50%;border:2px solid #dcdcdf;background:#fff"></div>
<div class="abs" style="left:2320px;top:488px;color:#25272c"><svg viewBox="0 0 28 28" width="25" height="25" fill="none" stroke="currentColor" stroke-width="2.3" stroke-linecap="square"><path d="M2 9V2H9M2 2L10 10M19 2H26V9M26 2L18 10M2 19V26H9M2 26L10 18M26 19V26H19M26 26L18 18"/></svg></div>
<div class="abs" style="left:2381px;top:472px;width:60px;height:60px;border-radius:50%;border:2px solid #dcdcdf;background:#fff"></div>
<div class="abs" style="left:2399px;top:488px;color:#25272c"><svg viewBox="0 0 28 28" width="25" height="25"><rect x="1" y="1" width="11" height="11" fill="currentColor"/><rect x="1" y="15" width="11" height="11" fill="currentColor"/><rect x="15" y="15" width="11" height="11" fill="currentColor"/><rect x="16" y="2" width="9" height="9" fill="none" stroke="currentColor" stroke-width="2" stroke-dasharray="2.5 1.5"/></svg></div>
<div class="abs" style="left:991px;top:550px;width:1456px;height:1194px;border:2px solid #dcdcdf;border-radius:12px;overflow:hidden"><div style="height:80px;background:#f2f2f3;border-bottom:2px solid #dcdcdf"></div></div>
<div class="abs" style="left:1149px;top:572px;width:2px;height:38px;background:#dcdcdf"></div>
<div class="abs" style="left:1295px;top:572px;width:2px;height:38px;background:#dcdcdf"></div>
<div class="abs" style="left:1441px;top:572px;width:2px;height:38px;background:#dcdcdf"></div>
<div class="abs" style="left:1589px;top:572px;width:2px;height:38px;background:#dcdcdf"></div>
<div class="abs" style="left:1737px;top:572px;width:2px;height:38px;background:#dcdcdf"></div>
<div class="abs" style="left:1937px;top:572px;width:2px;height:38px;background:#dcdcdf"></div>
<div class="abs" style="left:2085px;top:572px;width:2px;height:38px;background:#dcdcdf"></div>
<div class="abs" style="left:993px;top:710px;width:1452px;height:2px;background:#e3e4e7"></div>
<div class="abs" style="left:993px;top:790px;width:1452px;height:2px;background:#e3e4e7"></div>
<div class="abs" style="left:993px;top:870px;width:1452px;height:2px;background:#e3e4e7"></div>
<div class="abs" style="left:993px;top:950px;width:1452px;height:2px;background:#e3e4e7"></div>
<div class="abs" style="left:1013px;top:576px;width:30px;height:30px;border:2px solid #dcdcdf;border-radius:5px;background:transparent"></div>
<div class="abs th" style="left:1058px;top:571px">ID</div>
<div class="abs th" style="left:1150px;width:146px;text-align:center;top:571px">用户名称</div>
<div class="abs th" style="left:1296px;width:146px;text-align:center;top:571px">用户昵称</div>
<div class="abs th" style="left:1442px;width:148px;text-align:center;top:571px">部门</div>
<div class="abs th" style="left:1590px;width:148px;text-align:center;top:571px">邮箱</div>
<div class="abs th" style="left:1738px;width:200px;text-align:center;top:571px">状态</div>
<div class="abs th" style="left:1938px;width:148px;text-align:center;top:571px">创建时间</div>
<div class="abs th" style="left:2086px;width:360px;text-align:center;top:571px">操作</div>
<div class="abs" style="left:1013px;top:659px;width:30px;height:30px;border:2px solid #dcdcdf;border-radius:5px;background:transparent"></div>
<div class="abs td" style="left:1058px;top:655px">1</div>
<div class="abs td" style="left:1150px;width:146px;text-align:center;top:655px">admin</div>
<div class="abs td" style="left:1296px;width:146px;text-align:center;top:655px">好心情</div>
<div class="abs td" style="left:1442px;width:148px;text-align:center;top:655px">研发部门</div>
<div class="abs td" style="left:1590px;width:148px;text-align:center;top:655px">lxj521...</div>
<div class="abs" style="left:1793px;top:652px;width:88px;height:44px;border-radius:22px;background:#0560e2"></div>
<div class="abs" style="left:1841px;top:656px;width:36px;height:36px;border-radius:50%;background:#fff;box-shadow:0 1px 2px rgba(0,0,0,.15)"></div>
<div class="abs td" style="left:1958px;top:655px">2025-...</div>
<div class="abs td" style="left:2107px;top:655px;color:#0560e2">查看</div>
<div class="abs td" style="left:2179px;top:655px;color:#0560e2">修改</div>
<div class="abs td" style="left:2251px;top:655px;color:#0560e2">重置密码</div>
<div class="abs" style="left:1013px;top:739px;width:30px;height:30px;border:2px solid #dcdcdf;border-radius:5px;background:transparent"></div>
<div class="abs td" style="left:1058px;top:735px">3</div>
<div class="abs td" style="left:1150px;width:146px;text-align:center;top:735px">test</div>
<div class="abs td" style="left:1296px;width:146px;text-align:center;top:735px">本部门...</div>
<div class="abs td" style="left:1442px;width:148px;text-align:center;top:735px">市场部门</div>
<div class="abs" style="left:1793px;top:732px;width:88px;height:44px;border-radius:22px;background:#0560e2"></div>
<div class="abs" style="left:1841px;top:736px;width:36px;height:36px;border-radius:50%;background:#fff;box-shadow:0 1px 2px rgba(0,0,0,.15)"></div>
<div class="abs td" style="left:1958px;top:735px">2025-...</div>
<div class="abs td" style="left:2107px;top:735px;color:#0560e2">查看</div>
<div class="abs td" style="left:2179px;top:735px;color:#0560e2">修改</div>
<div class="abs td" style="left:2251px;top:735px;color:#0560e2">重置密码</div>
<div class="abs td" style="left:2377px;top:735px;color:#e5334f">删除</div>
<div class="abs" style="left:1013px;top:819px;width:30px;height:30px;border:2px solid #dcdcdf;border-radius:5px;background:transparent"></div>
<div class="abs td" style="left:1058px;top:815px">4</div>
<div class="abs td" style="left:1150px;width:146px;text-align:center;top:815px">test1</div>
<div class="abs td" style="left:1296px;width:146px;text-align:center;top:815px">仅本人...</div>
<div class="abs td" style="left:1442px;width:148px;text-align:center;top:815px">上海分...</div>
<div class="abs" style="left:1793px;top:812px;width:88px;height:44px;border-radius:22px;background:#0560e2"></div>
<div class="abs" style="left:1841px;top:816px;width:36px;height:36px;border-radius:50%;background:#fff;box-shadow:0 1px 2px rgba(0,0,0,.15)"></div>
<div class="abs td" style="left:1958px;top:815px">2025-...</div>
<div class="abs td" style="left:2107px;top:815px;color:#0560e2">查看</div>
<div class="abs td" style="left:2179px;top:815px;color:#0560e2">修改</div>
<div class="abs td" style="left:2251px;top:815px;color:#0560e2">重置密码</div>
<div class="abs td" style="left:2377px;top:815px;color:#e5334f">删除</div>
<div class="abs" style="left:1013px;top:899px;width:30px;height:30px;border:2px solid #dcdcdf;border-radius:5px;background:transparent"></div>
<div class="abs td" style="left:1058px;top:895px">11</div>
<div class="abs td" style="left:1150px;width:146px;text-align:center;top:895px">test001</div>
<div class="abs td" style="left:1296px;width:146px;text-align:center;top:895px">济南测...</div>
<div class="abs td" style="left:1442px;width:148px;text-align:center;top:895px">济南总...</div>
<div class="abs td" style="left:1590px;width:148px;text-align:center;top:895px">56324...</div>
<div class="abs" style="left:1793px;top:892px;width:88px;height:44px;border-radius:22px;background:#0560e2"></div>
<div class="abs" style="left:1841px;top:896px;width:36px;height:36px;border-radius:50%;background:#fff;box-shadow:0 1px 2px rgba(0,0,0,.15)"></div>
<div class="abs td" style="left:1958px;top:895px">2025-...</div>
<div class="abs td" style="left:2107px;top:895px;color:#0560e2">查看</div>
<div class="abs td" style="left:2179px;top:895px;color:#0560e2">修改</div>
<div class="abs td" style="left:2251px;top:895px;color:#0560e2">重置密码</div>
<div class="abs td" style="left:2377px;top:895px;color:#e5334f">删除</div>
<div class="abs td" style="left:1000px;top:1776px;color:#25272c">共 4 条记录</div>
<div class="abs" style="left:1144px;top:1768px;width:214px;height:56px;border:2px solid #dcdcdf;border-radius:10px"></div>
<div class="abs td" style="left:1191px;top:1776px">20条/页</div>
<div class="abs" style="left:1322px;top:1789px"><svg viewBox="0 0 20 12" width="20" height="12"><path d="M1 1H19L10 11Z" fill="#b0b3bb"/></svg></div>
<div class="abs" style="left:2200px;top:1770px;width:52px;height:52px;border-radius:9px;background:#0560e2;color:#fff;font-size:28px;font-weight:bold;-webkit-text-stroke:0;line-height:52px;text-align:center">1</div>
<div class="abs" style="left:2024px;top:1783px;transform:scale(0.92,0.86);transform-origin:50% 50%"><svg viewBox="0 0 22 26" width="22" height="26" fill="none" stroke="#8c8d91" stroke-width="2.5" stroke-linecap="square"><path d="M2 1V25M19 2L9 13L19 24"/></svg></div>
<div class="abs" style="left:2086px;top:1783px;transform:scale(0.92,0.86);transform-origin:50% 50%"><svg viewBox="0 0 26 26" width="26" height="26" fill="none" stroke="#8c8d91" stroke-width="2.5" stroke-linecap="square"><path d="M13 2L3 13L13 24M24 2L14 13L24 24"/></svg></div>
<div class="abs" style="left:2152px;top:1783px;transform:scale(0.92,0.86);transform-origin:50% 50%"><svg viewBox="0 0 16 26" width="16" height="26" fill="none" stroke="#8c8d91" stroke-width="2.5" stroke-linecap="square"><path d="M14 2L3 13L14 24"/></svg></div>
<div class="abs" style="left:2281px;top:1783px;transform:scale(0.92,0.86);transform-origin:50% 50%"><svg viewBox="0 0 16 26" width="16" height="26" fill="none" stroke="#8c8d91" stroke-width="2.5" stroke-linecap="square"><path d="M2 2L13 13L2 24"/></svg></div>
<div class="abs" style="left:2339px;top:1783px;transform:scale(0.92,0.86);transform-origin:50% 50%"><svg viewBox="0 0 26 26" width="26" height="26" fill="none" stroke="#8c8d91" stroke-width="2.5" stroke-linecap="square"><path d="M2 2L12 13L2 24M13 2L23 13L13 24"/></svg></div>
<div class="abs" style="left:2405px;top:1783px;transform:scale(0.92,0.86);transform-origin:50% 50%"><svg viewBox="0 0 22 26" width="22" height="26" fill="none" stroke="#8c8d91" stroke-width="2.5" stroke-linecap="square"><path d="M20 1V25M3 2L13 13L3 24"/></svg></div>
<div class="abs" id="edge"></div>
<div class="abs" id="corner"></div>
</body></html>
